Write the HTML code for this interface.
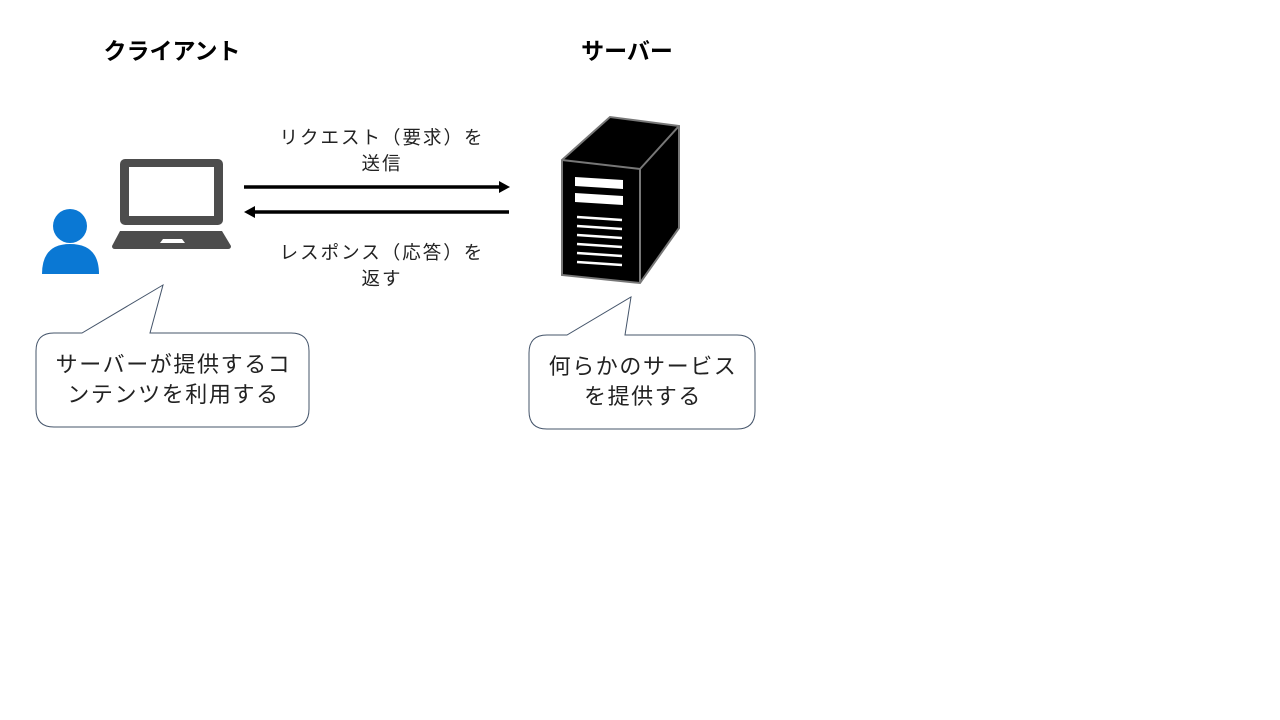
<!DOCTYPE html>
<html><head><meta charset="utf-8"><style>
body{margin:0;width:1280px;height:720px;background:#fff;overflow:hidden;font-family:"Liberation Sans","Noto Sans CJK JP",sans-serif;}
.t{position:absolute;white-space:nowrap;text-align:center;color:#222}
</style></head><body>
<svg width="1280" height="720" style="position:absolute;left:0;top:0">
<circle cx="70" cy="226" r="17" fill="#0a78d4"/>
<path d="M42 274 Q42 244 70 244 Q99 244 99 274 Z" fill="#0a78d4"/>
<rect x="120" y="159" width="103" height="66" rx="5" fill="#4d4d4d"/>
<rect x="129" y="167" width="85" height="49" fill="#fff"/>
<path d="M120 231 L222 231 L231 246 Q231 249 228 249 L115 249 Q112 249 112 246 Z" fill="#4d4d4d"/>
<path d="M160 243 L163 239 L182 239 L185 243 Z" fill="#fff"/>
<line x1="244" y1="187" x2="500" y2="187" stroke="#000" stroke-width="3.5"/>
<path d="M499 181 L510 187 L499 193 Z" fill="#000"/>
<line x1="254" y1="212" x2="509" y2="212" stroke="#000" stroke-width="3.5"/>
<path d="M255 206 L244 212 L255 218 Z" fill="#000"/>
<path d="M562 160 L610 117 L679 126 L679 228 L640 283 L562 275 Z" fill="#000" stroke="#777" stroke-width="2"/>
<path d="M562 160 L640 169 L679 126 M640 169 L640 283" stroke="#777" stroke-width="2" fill="none"/>
<path d="M575 177 L623 180 L623 189 L575 186 Z" fill="#fff"/>
<path d="M575 193 L623 196 L623 205 L575 202 Z" fill="#fff"/>
<g stroke="#fff" stroke-width="2.5">
<line x1="577" y1="217" x2="622" y2="220"/>
<line x1="577" y1="226" x2="622" y2="229"/>
<line x1="577" y1="235" x2="622" y2="238"/>
<line x1="577" y1="244" x2="622" y2="247"/>
<line x1="577" y1="253" x2="622" y2="256"/>
<line x1="577" y1="262" x2="622" y2="265"/>
</g>
<path d="M54 333 L82 333 L163 285 L150 333 L291 333 Q309 333 309 351 L309 409 Q309 427 291 427 L54 427 Q36 427 36 409 L36 351 Q36 333 54 333 Z" fill="#fff" stroke="#44546a" stroke-width="1"/>
<path d="M547 335 L567 335 L631 297 L625 335 L737 335 Q755 335 755 353 L755 411 Q755 429 737 429 L547 429 Q529 429 529 411 L529 353 Q529 335 547 335 Z" fill="#fff" stroke="#44546a" stroke-width="1"/>
</svg>
<div class="t" style="left:72px;top:32px;width:200px;font-size:23px;font-weight:bold;color:#000">クライアント</div>
<div class="t" style="left:527px;top:32px;width:200px;font-size:23px;font-weight:bold;color:#000">サーバー</div>
<div class="t" style="left:252px;top:125px;width:260px;font-size:18.5px;line-height:26px;letter-spacing:2px">リクエスト（要求）を<br>送信</div>
<div class="t" style="left:252px;top:240px;width:260px;font-size:18.5px;line-height:26px;letter-spacing:2px">レスポンス（応答）を<br>返す</div>
<div class="t" style="left:37px;top:350px;width:273px;font-size:22px;line-height:30px;letter-spacing:1.6px">サーバーが提供するコ<br>ンテンツを利用する</div>
<div class="t" style="left:530px;top:352px;width:226px;font-size:22px;line-height:30px;letter-spacing:1.6px">何らかのサービス<br>を提供する</div>
</body></html>
